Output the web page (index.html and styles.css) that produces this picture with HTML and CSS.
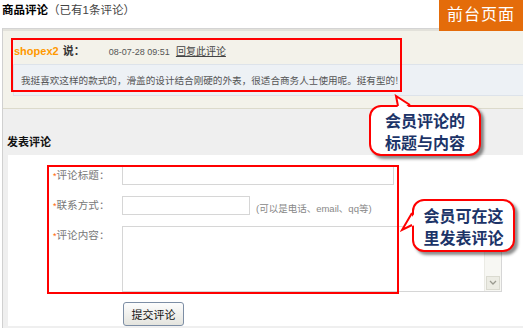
FILE: index.html
```html
<!DOCTYPE html>
<html lang="zh-CN">
<head>
  <meta charset="UTF-8" />
  <meta name="viewport" content="width=device-width, initial-scale=1" />
  <title>商品评论</title>
  <link rel="stylesheet" href="styles.css">
</head>
<body>

<header class="page-title">
  <strong>商品评论</strong><span>（已有1条评论）</span>
</header>
<div class="badge">前台页面</div>

<section class="main">
  <div class="comment-panel">
    <div class="comment-head">
      <span class="author">shopex2</span>
      <b class="says">说：</b>
      <span class="date">08-07-28 09:51</span>
      <a class="reply" href="#">回复此评论</a>
    </div>
    <div class="comment-body">我挺喜欢这样的款式的，滑盖的设计结合刚硬的外表，很适合商务人士使用呢。挺有型的!</div>
  </div>

  <h3 class="post-title">发表评论</h3>

  <form class="post-form" onsubmit="return false">
    <label class="field-label"><i>*</i>评论标题：</label>
    <div class="field"><input class="input title-input" type="text"></div>

    <label class="field-label"><i>*</i>联系方式：</label>
    <div class="field"><input class="input contact-input" type="text"><span class="hint">(可以是电话、email、qq等)</span></div>

    <label class="field-label"><i>*</i>评论内容：</label>
    <div class="field">
      <div class="textarea-box">
        <textarea></textarea>
        <div class="scrollbar">
          <span class="scroll-arrow">
            <svg width="8" height="6" viewBox="0 0 8 6"><polyline points="1,1 4,4 7,1" fill="none" stroke="#9a9a90" stroke-width="1.3"/></svg>
          </span>
        </div>
      </div>
    </div>

    <span></span>
    <div class="field"><button class="submit-btn">提交评论</button></div>
  </form>
</section>

<!-- annotations -->
<div class="mark mark-comment"></div>
<div class="mark mark-form"></div>

<div class="callout callout-top">会员评论的<br>标题与内容</div>
<svg class="tail tail-top" width="26" height="16" viewBox="0 0 26 16">
  <polygon points="8,15 6,2 21,15" fill="#fff"/>
  <polyline points="8,12 6,2 20,11" fill="none" stroke="#f00" stroke-width="2"/>
</svg>

<div class="callout callout-side">会员可在这<br>里发表评论</div>
<svg class="tail tail-side" width="16" height="26" viewBox="0 0 16 26">
  <polygon points="15,5 2,22 15,17" fill="#fff"/>
  <polyline points="12,5 2,22 12,17" fill="none" stroke="#f00" stroke-width="2"/>
</svg>

</body>
</html>
```

FILE: styles.css
```css
body {
  margin: 0;
  width: 523px;
  height: 328px;
  overflow: hidden;
  position: relative;
  background: #fff;
  font-family: 'Liberation Sans', 'Noto Sans CJK SC', sans-serif;
  color: #333;
}
.page-title {
  height: 28px;
  padding-left: 2px;
  font-size: 11.5px;
  line-height: 21px;
}
.page-title strong {
  color: #000;
}
.page-title span {
  color: #444;
}
.badge {
  position: absolute;
  top: 0;
  right: 0;
  width: 84px;
  height: 31px;
  background: #e46c0a;
  color: #fff;
  font-size: 16px;
  line-height: 30px;
  text-align: center;
  letter-spacing: 1px;
}
.main {
  margin-left: 2px;
  height: 299px;
  border-top: 1px solid #d4d4d4;
  border-left: 1px solid #d0d0d0;
  background: #efefef;
}
.comment-panel {
  height: 80px;
  box-sizing: border-box;
  padding-top: 12px;
  background: #f3f2ea;
  border-top: 2px solid #e2e1da;
  border-bottom: 1px solid #dcdacb;
}
.comment-head {
  padding-left: 11px;
  height: 16px;
  line-height: 16px;
  font-size: 11px;
}
.author {
  color: #f90;
  font-weight: bold;
}
.says {
  color: #333;
  margin-left: 1px;
}
.date {
  margin-left: 21px;
  font-size: 9px;
  color: #555;
}
.reply {
  margin-left: 3px;
  color: #444;
  font-size: 10px;
}
.comment-body {
  margin: 5px 0 0 10px;
  height: 32px;
  box-sizing: border-box;
  padding-left: 7px;
  background: #edf1f5;
  border: 1px solid #dde3ea;
  border-right: none;
  font-family: 'Noto Sans CJK SC', sans-serif;
  font-size: 9.6px;
  line-height: 30px;
  color: #555;
  white-space: nowrap;
}
.post-title {
  margin: 0;
  padding: 25px 0 0 4px;
  height: 21px;
  font-size: 11px;
  line-height: 16px;
  color: #111;
}
.post-form {
  margin-left: 5px;
  height: 171px;
  box-sizing: border-box;
  padding: 11px 0 0 45px;
  background: #fff;
  display: grid;
  grid-template-columns: 69px auto;
  row-gap: 10px;
  align-content: start;
}
.field-label {
  font-size: 10.6px;
  color: #777;
  line-height: 19px;
}
.field-label i {
  font-style: normal;
  color: #f60;
  font-size: 9px;
}
.field {
  display: flex;
  align-items: flex-start;
}
.input {
  margin: 0;
  padding: 0;
  height: 19px;
  box-sizing: border-box;
  border: 1px solid #d6d6d6;
  background: #fff;
}
.title-input {
  width: 272px;
}
.contact-input {
  width: 128px;
}
.hint {
  margin: 6px 0 0 6px;
  font-size: 9.5px;
  color: #888;
  line-height: 13px;
}
.textarea-box {
  width: 380px;
  height: 66px;
  box-sizing: border-box;
  border: 1px solid #d6d6d6;
  display: flex;
}
.textarea-box textarea {
  flex: 1;
  border: none;
  resize: none;
  margin: 0;
  padding: 0;
  outline: none;
}
.scrollbar {
  width: 14px;
  background: #f7f7f3;
  border-left: 1px solid #ebebe5;
  display: flex;
  flex-direction: column;
  justify-content: flex-end;
  padding: 0 1px 1px;
}
.scroll-arrow {
  height: 12px;
  background: #ecece4;
  border: 1px solid #dadad0;
  display: flex;
  align-items: center;
  justify-content: center;
}
.submit-btn {
  margin: 0 0 0 1px;
  width: 61px;
  height: 24px;
  padding: 0;
  border: 1px solid #7d8ea5;
  border-radius: 3px;
  background: linear-gradient(#fdfdfd, #e4e4de);
  font-family: 'Noto Sans CJK SC', sans-serif;
  font-size: 11px;
  color: #111;
}
.mark {
  position: absolute;
  border: 2px solid #f00;
  box-sizing: border-box;
}
.mark-comment {
  left: 11px;
  top: 38px;
  width: 391px;
  height: 54px;
}
.mark-form {
  left: 47px;
  top: 165px;
  width: 352px;
  height: 129px;
}
.callout {
  position: absolute;
  box-sizing: border-box;
  background: #fff;
  border: 2px solid #f00;
  border-radius: 12px;
  box-shadow: 3px 3px 3px rgba(0, 0, 0, 0.45);
  font-family: 'Noto Sans CJK SC', sans-serif;
  font-weight: bold;
  font-size: 16px;
  line-height: 22px;
  color: #1c3468;
  text-align: center;
}
.callout-top {
  left: 369px;
  top: 105px;
  width: 112px;
  height: 51px;
  padding-top: 2px;
}
.callout-side {
  left: 412px;
  top: 199px;
  width: 103px;
  height: 53px;
  padding-top: 3px;
}
.tail {
  position: absolute;
}
.tail-top {
  left: 390px;
  top: 94px;
}
.tail-side {
  left: 400px;
  top: 208px;
}
```
